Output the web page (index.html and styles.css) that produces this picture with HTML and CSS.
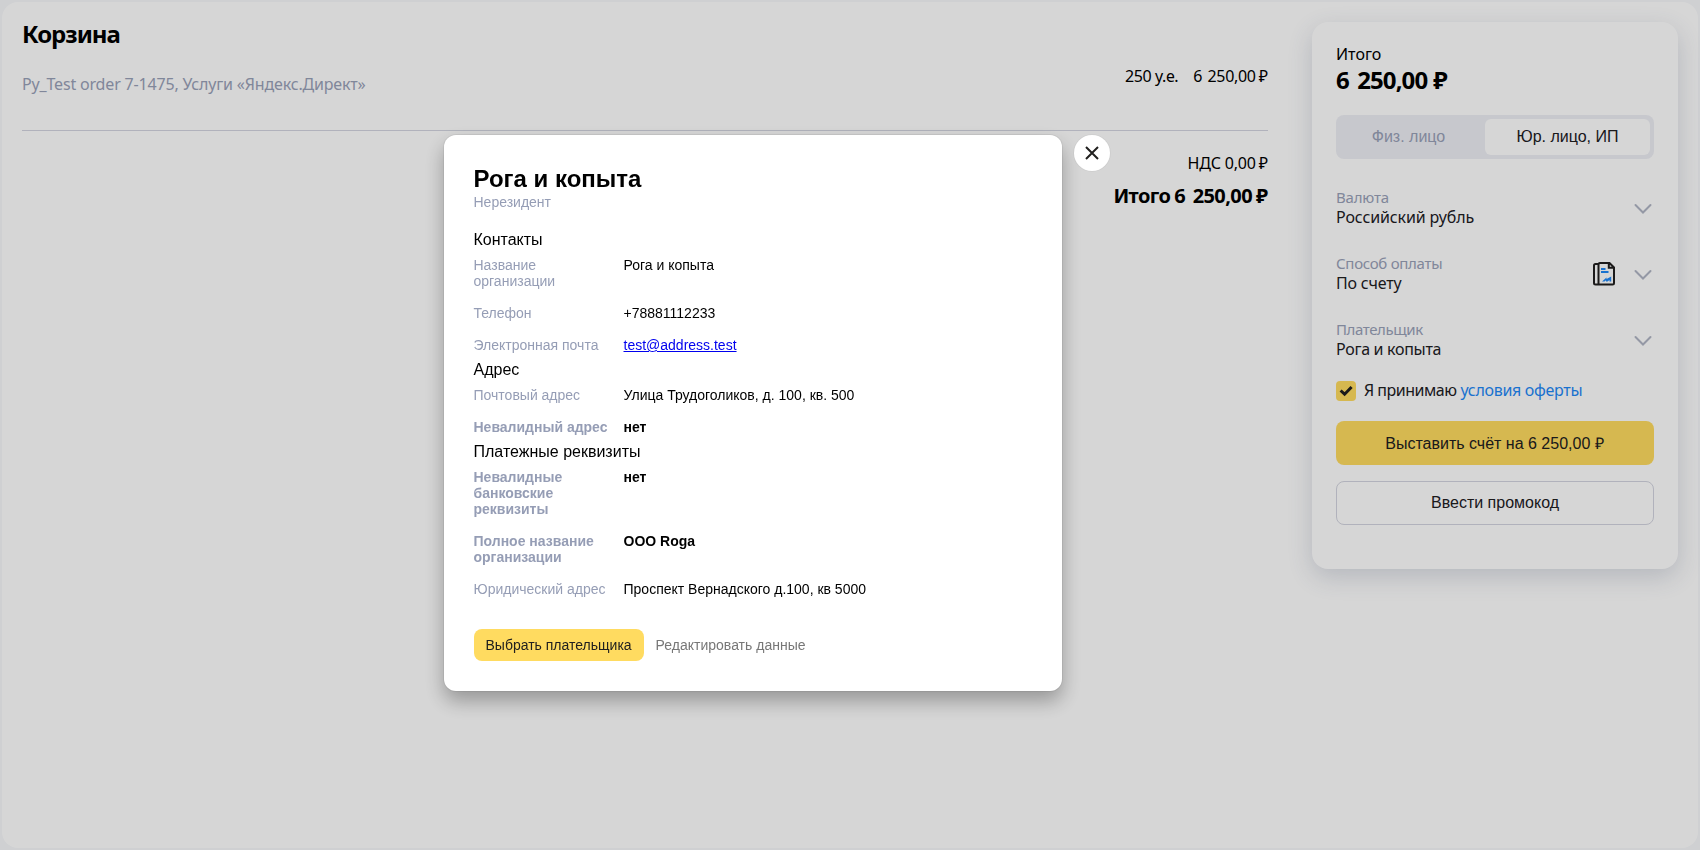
FILE: index.html
```html
<!DOCTYPE html>
<html lang="ru">
<head>
<meta charset="utf-8">
<title>Корзина</title>
<link rel="stylesheet" href="styles.css">
</head>
<body>
<div class="page">
  <main class="cart">
    <h1 class="cart-title">Корзина</h1>
    <div class="item">
      <div class="item-name">Py_Test order 7-1475, Услуги «Яндекс.Директ»</div>
      <div class="item-numbers"><span class="item-qty">250 у.е.</span><span class="item-price">6 250,00<span class="rub">₽</span></span></div>
    </div>
    <div class="vat">НДС 0,00<span class="rub">₽</span></div>
    <div class="total">Итого<span class="total-sum">6 250,00</span><span class="rub">₽</span></div>
  </main>
  <aside class="card">
    <div class="card-label">Итого</div>
    <div class="card-sum">6 250,00<span class="rub">₽</span></div>
    <div class="segment">
      <button class="segment-item">Физ. лицо</button>
      <button class="segment-item active">Юр. лицо, ИП</button>
    </div>
    <div class="fields">
      <div class="field">
        <div class="field-text"><div class="field-label ls-currency">Валюта</div><div class="field-value">Российский рубль</div></div>
        <svg class="chevron" width="18" height="12" viewBox="0 0 18 12"><path d="M1.500 2 9 9.500 16.500 2"/></svg>
      </div>
      <div class="field">
        <div class="field-text"><div class="field-label">Способ оплаты</div><div class="field-value ls-invoice">По счету</div></div>
        <svg class="invoice" width="24" height="26" viewBox="0 0 24 26">
          <path class="ink" d="M6.500 3H3.500Q2 3 2 4.500V22Q2 23.500 3.500 23.500H20.500Q22 23.500 22 22V6.500L17.500 2H8Q6.500 2 6.500 3.500V23.500M16.800 2.500V6.800H21.500"/>
          <path class="blue" d="M9 8h4.500M9 11h7.500"/>
          <path class="blue-fill" d="M10 20.500 14.500 16.500V18l4.700-2.500V20.500h-1.700v-1.500l-2 1.500h-1.500v-1.200l-1.500 1.200z"/>
        </svg>
        <svg class="chevron" width="18" height="12" viewBox="0 0 18 12"><path d="M1.500 2 9 9.500 16.500 2"/></svg>
      </div>
      <div class="field">
        <div class="field-text"><div class="field-label ls-payer">Плательщик</div><div class="field-value ls-name">Рога и копыта</div></div>
        <svg class="chevron" width="18" height="12" viewBox="0 0 18 12"><path d="M1.500 2 9 9.500 16.500 2"/></svg>
      </div>
    </div>
    <div class="agree">
      <span class="checkbox"><svg width="20" height="20" viewBox="0 0 20 20"><path d="M4.600 9.500 8.600 13.200 15.600 6"/></svg></span>
      <span class="agree-text">Я принимаю</span><a class="agree-link">условия оферты</a>
    </div>
    <button class="btn btn-primary">Выставить счёт на 6 250,00 ₽</button>
    <button class="btn btn-outline">Ввести промокод</button>
  </aside>
</div>

<div class="overlay">
  <section class="modal">
    <h2 class="modal-title">Рога и копыта</h2>
    <div class="modal-sub">Нерезидент</div>

    <h3 class="group group-first">Контакты</h3>
    <dl class="rows">
      <dt>Название организации</dt><dd>Рога и копыта</dd>
      <dt>Телефон</dt><dd>+78881112233</dd>
      <dt>Электронная почта</dt><dd><a class="mail" href="mailto:test@address.test">test@address.test</a></dd>
    </dl>

    <h3 class="group">Адрес</h3>
    <dl class="rows">
      <dt>Почтовый адрес</dt><dd>Улица Трудоголиков, д. 100, кв. 500</dd>
      <dt class="strong">Невалидный адрес</dt><dd class="strong">нет</dd>
    </dl>

    <h3 class="group">Платежные реквизиты</h3>
    <dl class="rows">
      <dt class="strong">Невалидные банковские реквизиты</dt><dd class="strong">нет</dd>
      <dt class="strong">Полное название организации</dt><dd class="strong">ООО Roga</dd>
      <dt>Юридический адрес</dt><dd>Проспект Вернадского д.100, кв 5000</dd>
    </dl>

    <div class="actions">
      <button class="small-btn small-primary">Выбрать плательщика</button>
      <button class="small-btn">Редактировать данные</button>
    </div>
  </section>
  <button class="close" aria-label="Закрыть"><svg width="16" height="16" viewBox="0 0 16 16"><path d="M2 2 14 14M14 2 2 14"/></svg></button>
</div>
</body>
</html>
```
FILE: styles.css
```css
* { box-sizing: border-box; }
body {
  margin: 0;
  height: 850px;
  padding: 2px;
  background: #f7f8fb;
  font-family: "Noto Sans", "Open Sans", sans-serif;
  font-size: 16px;
  line-height: 24px;
  color: #000;
  overflow: hidden;
}
h1, h2, h3, dl, dd { margin: 0; }
button { border: 0; padding: 0; background: none; color: #21201f; font: 16px "Liberation Sans", Arial, sans-serif; }
.page {
  height: 846px;
  padding: 16px 20px 0;
  display: flex;
  align-items: flex-start;
  gap: 44px;
  background: #fff;
  border-radius: 16px;
}
.cart { width: 1246px; text-align: right; }
.cart-title { font-size: 24px; line-height: 32px; letter-spacing: -1px; text-align: left; }
.item {
  display: flex;
  justify-content: space-between;
  height: 81px;
  padding-top: 14px;
  border-bottom: 1px solid #d3d5e0;
}
.item-name { padding-top: 8px; color: #99a1b8; letter-spacing: -0.17px; }
.item-qty { letter-spacing: -0.4px; margin-right: 15px; }
.item-price { letter-spacing: -0.3px; word-spacing: 1.5px; }
.rub { margin-left: 3px; letter-spacing: 0; }
.vat { margin-top: 20px; letter-spacing: -0.2px; }
.total { margin-top: 7px; font-size: 20px; line-height: 28px; font-weight: 700; letter-spacing: -0.6px; }
.total-sum { margin-left: 4px; word-spacing: 3px; }
.total .rub { margin-left: 4px; }

.card {
  width: 366px;
  height: 547px;
  margin-top: 4px;
  padding: 20px 24px;
  border-radius: 16px;
  background: #fff;
  box-shadow: 0 8px 24px rgba(60, 75, 110, 0.2);
}
.card-sum { font-size: 24px; line-height: 28px; font-weight: 700; letter-spacing: -0.9px; word-spacing: 3px; }
.card-sum .rub { margin-left: 6px; }
.segment {
  display: flex;
  gap: 8px;
  height: 44px;
  margin-top: 21px;
  padding: 4px;
  border-radius: 8px;
  background: #eeeff5;
}
.segment-item { width: 137px; border-radius: 6px; color: #99a1b8; }
.segment-item.active { width: 165px; background: #fff; color: #21201f; }
.fields { display: flex; flex-direction: column; gap: 26px; margin-top: 28px; }
.field { display: flex; align-items: center; height: 40px; padding-right: 2px; line-height: 20px; }
.field-text { flex: 1; }
.field-label { font-size: 15px; color: #99a1b8; letter-spacing: -0.28px; }
.field-value { color: #21201f; letter-spacing: -0.12px; }
.ls-currency { letter-spacing: -0.2px; }
.ls-invoice { letter-spacing: -0.18px; }
.ls-payer { letter-spacing: -0.4px; }
.ls-name { letter-spacing: -0.3px; }
.chevron { margin-top: 4px; fill: none; stroke: #b1b6c5; stroke-width: 2; stroke-linecap: round; }
.invoice { margin: 2px 18px 0 0; }
.ink { fill: none; stroke: #21201f; stroke-width: 2; }
.blue { fill: none; stroke: #1e88f7; stroke-width: 2; }
.blue-fill { fill: #1e88f7; }
.agree { display: flex; align-items: flex-start; height: 24px; margin-top: 19px; color: #21201f; }
.checkbox { width: 20px; height: 20px; margin: 3px 8px 0 0; border-radius: 4px; background: #ffdc60; }
.checkbox svg { display: block; fill: none; stroke: #21201f; stroke-width: 3; }
.agree-text { letter-spacing: -0.5px; margin-right: 4px; }
.agree-link { color: #1e88f7; letter-spacing: -0.3px; }
.btn { display: block; width: 318px; height: 44px; border-radius: 8px; }
.btn-primary { margin-top: 19px; padding: 0 1px 1px 0; background: #ffdc60; }
.btn-outline { margin-top: 16px; border: 1px solid #d3d5e0; }

.overlay {
  position: fixed;
  inset: 0;
  display: flex;
  align-items: flex-start;
  gap: 12px;
  padding: 135px 0 0 444px;
  background: rgba(0, 0, 0, 0.16);
  font-family: "Liberation Sans", Arial, sans-serif;
  font-size: 14px;
  line-height: 16px;
}
.modal {
  width: 618px;
  height: 556px;
  padding: 30px 30px 30px 29.5px;
  border-radius: 12px;
  background: #fff;
  box-shadow: 0 0 0 1px rgba(0, 0, 0, 0.06), 0 10px 20px rgba(0, 0, 0, 0.3);
}
.modal-title { font-size: 24px; line-height: 27px; }
.modal-sub { margin-top: 2px; color: #959db5; }
.group { margin: 8px 0; font-size: 16px; line-height: 18px; font-weight: 400; }
.group-first { margin-top: 21px; }
.rows { display: grid; grid-template-columns: 138px 1fr; gap: 16px 12px; }
.rows dt { color: #959db5; }
.rows .strong { font-weight: 700; }
.mail { color: #0000ee; }
.actions { display: flex; margin: 32px 0 0 0.5px; }
.small-btn { height: 32px; padding: 0 12.5px 0 11.5px; border-radius: 8px; color: #777; font-size: 14px; }
.small-primary { background: #ffdb60; color: #21201f; }
.close {
  display: grid;
  place-items: center;
  width: 36px;
  height: 36px;
  border-radius: 50%;
  background: #fff;
  box-shadow: 0 0 0 1px rgba(0, 0, 0, 0.04);
}
.close path { fill: none; stroke: #21201f; stroke-width: 2; }
```
